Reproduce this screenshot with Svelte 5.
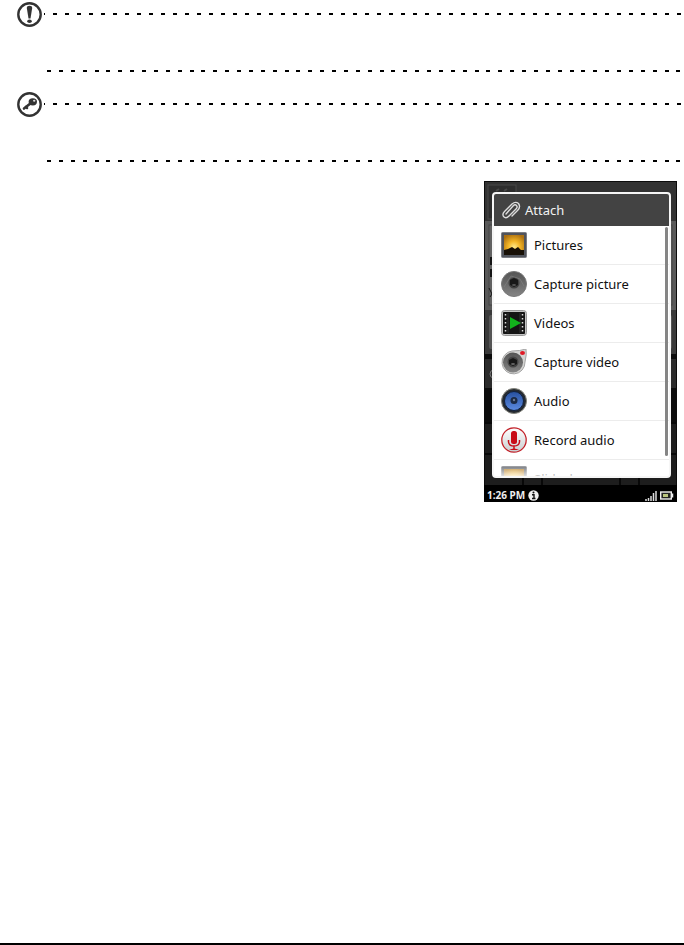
<script lang="ts">
  const options = [
    { icon: 'picture', label: 'Pictures' },
    { icon: 'camera', label: 'Capture picture' },
    { icon: 'film', label: 'Videos' },
    { icon: 'camcorder', label: 'Capture video' },
    { icon: 'speaker', label: 'Audio' },
    { icon: 'mic', label: 'Record audio' },
    { icon: 'picture', label: 'Slideshow' },
  ];

  const dashes = Array.from({ length: 54 });
</script>

{#snippet rule(kind: string)}
  <div class="rule {kind}">
    {#each dashes as _}<span></span>{/each}
  </div>
{/snippet}

{#snippet optionIcon(name: string)}
  <svg class="option-icon" viewBox="0 0 26 26" aria-hidden="true">
    {#if name === 'picture'}
      <rect x="0.5" y="0.5" width="25" height="25" rx="1" fill="#50545c" stroke="#7b7d82" />
      <rect x="3" y="3" width="20" height="20" fill="url(#sunset)" />
      <path d="M3 18 L7 17 L11 15 L14 17 L17 15 L20 18 L23 18 V23 H3z" fill="#171006" />
    {:else if name === 'camera'}
      <circle cx="13" cy="13" r="12.5" fill="url(#lens)" stroke="#777" />
      <path d="M3 16 L10 5 L19 8 L23 15" fill="none" stroke="#8a8a8a" opacity=".5" />
      <circle cx="13" cy="12" r="5.5" fill="#404040" />
      <path d="M9 9 L13 7 L17 9 V14 L13 16 L9 14z" fill="#171717" />
      <ellipse cx="13" cy="14" rx="2" ry="1" fill="#555" />
    {:else if name === 'film'}
      <rect x="0.5" y="0.5" width="25" height="25" rx="3" fill="#c4c4c4" stroke="#999" />
      <rect x="2" y="2" width="22" height="22" rx="1" fill="#151515" />
      <path d="M4.5 4 V23 M21.5 4 V23" stroke="#ddd" stroke-width="1.5" stroke-dasharray="1.5 2.5" />
      <path d="M7 3 V23 M19 3 V23" stroke="#333" />
      <path d="M9 7 L20 13 L9 19z" fill="#12b41c" />
    {:else if name === 'camcorder'}
      <path d="M11 2 Q19 2 25 0 Q26 5 24 13 A11.5 11.5 0 1 1 11 2z" fill="#d4d4d2" stroke="#a5a5a5" />
      <circle cx="12" cy="13.5" r="10" fill="url(#lens)" />
      <circle cx="12" cy="13" r="5.5" fill="#444" />
      <path d="M8 11 L12 9 L16 11 V15 L12 17 L8 15z" fill="#171717" />
      <ellipse cx="12" cy="15" rx="2" ry="1" fill="#666" />
      <ellipse cx="21.5" cy="4" rx="2.5" ry="2" fill="#df1925" />
    {:else if name === 'speaker'}
      <circle cx="13" cy="13" r="12.5" fill="#252a31" stroke="#85857c" />
      <circle cx="13" cy="13" r="9.5" fill="url(#cone)" stroke="#11213d" />
      <circle cx="13" cy="12.5" r="3.5" fill="#1b2a45" />
      <circle cx="13" cy="12" r="1.2" fill="#6a7690" />
    {:else}
      <circle cx="13" cy="13" r="12.2" fill="url(#dish)" stroke="#c3252d" stroke-width="1.3" />
      <rect x="10" y="4" width="6" height="13" rx="2.5" fill="#c80d18" />
      <path d="M7.5 13 V15 Q8 19 13 19 Q18 19 18.5 15 V13 M13 19 V22" fill="none" stroke="#c80d18" stroke-width="1.5" />
      <path d="M8 23 Q13 20 18 23z" fill="#c80d18" />
    {/if}
  </svg>
{/snippet}

<svg class="defs" aria-hidden="true">
  <defs>
    <radialGradient id="sunset" cx=".5" cy=".6" r=".65">
      <stop offset="0" stop-color="#ffe98a" />
      <stop offset=".45" stop-color="#f3b526" />
      <stop offset="1" stop-color="#ad7110" />
    </radialGradient>
    <linearGradient id="lens" x1="0" y1="0" x2="0" y2="1">
      <stop offset="0" stop-color="#555" />
      <stop offset=".5" stop-color="#6a6a6a" />
      <stop offset="1" stop-color="#858585" />
    </linearGradient>
    <linearGradient id="cone" x1="0" y1="0" x2="0" y2="1">
      <stop offset="0" stop-color="#27509f" />
      <stop offset="1" stop-color="#5c8be0" />
    </linearGradient>
    <linearGradient id="dish" x1="0" y1="0" x2="0" y2="1">
      <stop offset="0" stop-color="#fff" />
      <stop offset="1" stop-color="#c9cdcf" />
    </linearGradient>
  </defs>
</svg>

<main class="page">
  <section class="note">
    <div class="note-head">
      <svg class="note-icon" viewBox="0 0 26 26" role="img" aria-label="Important">
        <circle cx="12.5" cy="13.5" r="11.2" fill="#fff" stroke="#333" stroke-width="2.4" />
        <path d="M9.8 7 Q9.8 4.8 12.5 4.8 Q15.2 4.8 15.2 7 L13.5 17.5 H11.5z" fill="#333" />
        <ellipse cx="12.5" cy="20.3" rx="2.3" ry="1.8" fill="#333" />
      </svg>
      {@render rule('top')}
    </div>
    <div class="note-body"></div>
    {@render rule('bottom')}
  </section>

  <section class="note">
    <div class="note-head">
      <svg class="note-icon" viewBox="0 0 26 26" role="img" aria-label="Tip">
        <circle cx="12.5" cy="13.5" r="11.2" fill="#fff" stroke="#333" stroke-width="2.4" />
        <path d="M7 17.5 L14 12 M8.5 16 L10 17" fill="none" stroke="#333" stroke-width="2.6" stroke-linecap="round" />
        <ellipse cx="15.8" cy="10.8" rx="4.2" ry="3.6" fill="#333" />
        <ellipse cx="17.2" cy="9.8" rx="1.2" ry="1" fill="#ddd" />
      </svg>
      {@render rule('top')}
    </div>
    <div class="note-body"></div>
    {@render rule('bottom')}
  </section>

  <div class="phone">
    <svg class="backdrop" viewBox="0 0 193 304" preserveAspectRatio="none" aria-hidden="true">
      <rect width="193" height="304" fill="#0c0c0c" />
      <rect x="1" y="1" width="191" height="39" fill="#333" />
      <rect x="4" y="4" width="28" height="34" fill="#2d2d2d" stroke="#484848" />
      <path d="M12 10 L15 8 M20 10 L23 8" stroke="#484848" stroke-width="2" />
      <rect x="1" y="40" width="191" height="89" fill="#595959" />
      <rect x="5" y="44" width="183" height="80" fill="#626262" stroke="#444" />
      <rect x="6" y="76" width="4" height="8" fill="#151515" />
      <rect x="6" y="88" width="4" height="8" fill="#151515" />
      <path d="M5 107 L8 113 L11 107 M8 113 L6 116" fill="none" stroke="#151515" />
      <rect x="1" y="129" width="191" height="44" fill="#3a3a3a" />
      <rect x="5" y="134" width="183" height="34" rx="2" fill="#555" />
      <rect x="1" y="178" width="191" height="29" fill="#2b2b2b" />
      <circle cx="10" cy="193" r="4" fill="none" stroke="#777" />
      <rect x="1" y="243" width="191" height="61" fill="#1d1d1d" />
      <path d="M1 242 H192 M1 273 H192 M39 297 V304 M58 297 V304 M136 297 V304 M155 297 V304" stroke="#080808" stroke-width="2" />
    </svg>

    <div class="dialog" role="dialog" aria-labelledby="attach-title">
      <header>
        <svg class="clip" viewBox="0 0 20 20" aria-hidden="true">
          <path d="M5 14 L12 6 Q14 4 15.5 5.5 Q17 7 15 9 L8 16 Q5 19 2.5 16.5 Q1 14 3.5 11.5 L11 4 Q14.5 1 17.5 3.5 Q20 7 16.5 10.5 L11 16" fill="none" stroke="#ddd" stroke-width="1.4" stroke-linecap="round" />
        </svg>
        <h1 id="attach-title">Attach</h1>
      </header>
      <ul>
        {#each options as option}
          <li>
            <button type="button">
              {@render optionIcon(option.icon)}
              <span>{option.label}</span>
            </button>
          </li>
        {/each}
      </ul>
      <div class="fade"></div>
      <div class="scroll-thumb"></div>
    </div>

    <footer class="status">
      <time>1:26 PM</time>
      <svg class="info" viewBox="0 0 11 11" aria-hidden="true">
        <circle cx="5.5" cy="5.5" r="5.2" fill="#eee" />
        <path d="M4 4.8 H6 V8 M4 8.5 H7.5" fill="none" stroke="#111" stroke-width="1.4" />
        <circle cx="5.5" cy="2.5" r="1" fill="#111" />
      </svg>
      <svg class="signal" viewBox="0 0 12 11" aria-hidden="true">
        <path d="M1 9 V11 M3.5 8 V11 M6 6 V11 M8.5 3 V11 M11 1 V11" stroke="#ddd" stroke-width="1.5" />
      </svg>
      <svg class="battery" viewBox="0 0 14 9" aria-hidden="true">
        <rect x="0.7" y="1" width="10.6" height="7" fill="#222" stroke="#eee" stroke-width="1.4" />
        <rect x="3" y="3" width="5" height="3" fill="#b9c47e" />
        <path d="M12.5 2.5 V6.5" stroke="#eee" stroke-width="1.5" />
      </svg>
    </footer>
  </div>
</main>

<style>
  :global(body) {
    margin: 0;
    background: #fff;
  }
  .defs {
    position: absolute;
    width: 0;
    height: 0;
  }
  .page {
    display: flex;
    flex-direction: column;
    box-sizing: border-box;
    min-height: 100vh;
    border-bottom: 2px solid #000;
    font-family: "Noto Sans", "Open Sans", sans-serif;
  }

  .note {
    margin-bottom: 18px;
    padding: 0 3px 0 17px;
  }
  .note-head {
    display: flex;
    align-items: center;
    gap: 1px;
    height: 28px;
  }
  .note-icon {
    flex: none;
    width: 26px;
    height: 26px;
  }
  .note-body {
    min-height: 42px;
  }
  .rule {
    display: flex;
    flex: 1;
    justify-content: space-between;
    height: 2px;
  }
  .rule span {
    width: 4px;
    background: #000;
  }
  .rule.top span:first-child {
    width: 1px;
  }
  .rule.bottom {
    margin-left: 30px;
  }

  .phone {
    position: relative;
    align-self: flex-end;
    box-sizing: border-box;
    width: 193px;
    margin: 1px 7px 0 0;
    padding-top: 11px;
    background: #000;
  }
  .backdrop {
    position: absolute;
    top: 0;
    left: 0;
    width: 100%;
    height: calc(100% - 17px);
  }
  .dialog {
    position: relative;
    box-sizing: border-box;
    height: 286px;
    margin: 0 6px 0 8px;
    overflow: hidden;
    border: 2px solid #f6f6f6;
    border-radius: 4px;
    background: #fff;
  }
  header {
    display: flex;
    align-items: center;
    gap: 4px;
    height: 32px;
    padding-left: 7px;
    background: #434343;
  }
  .clip {
    width: 20px;
    height: 20px;
  }
  h1 {
    margin: 0;
    color: #f2f2f2;
    font-size: 13px;
    font-weight: 400;
    line-height: 16px;
  }
  ul {
    margin: 0;
    padding: 0;
    list-style: none;
  }
  li {
    border-bottom: 1px solid #ececec;
  }
  button {
    display: flex;
    align-items: center;
    gap: 7px;
    width: 100%;
    height: 38px;
    padding: 0 7px;
    border: 0;
    background: none;
    color: #111;
    font: 13px/16px "Noto Sans", "Open Sans", sans-serif;
    text-align: left;
  }
  .option-icon {
    flex: none;
    width: 26px;
    height: 26px;
  }
  /* list runs on below the dialog's edge */
  .fade {
    position: absolute;
    right: 0;
    bottom: 0;
    left: 0;
    height: 14px;
    background: linear-gradient(#fff0, #fffc);
    pointer-events: none;
  }
  .scroll-thumb {
    position: absolute;
    top: 33px;
    right: 1px;
    width: 3px;
    height: 229px;
    border-radius: 2px;
    background: #858585;
  }
  .status {
    display: flex;
    align-items: center;
    box-sizing: border-box;
    height: 17px;
    margin-top: 7px;
    padding: 3px 3px 0;
    color: #eee;
    font-size: 10px;
    font-weight: 700;
    line-height: 14px;
  }
  .info {
    width: 11px;
    height: 11px;
    margin-left: 3px;
  }
  .signal {
    width: 12px;
    height: 11px;
    margin-left: auto;
  }
  .battery {
    width: 14px;
    height: 9px;
    margin-left: 3px;
  }
</style>
